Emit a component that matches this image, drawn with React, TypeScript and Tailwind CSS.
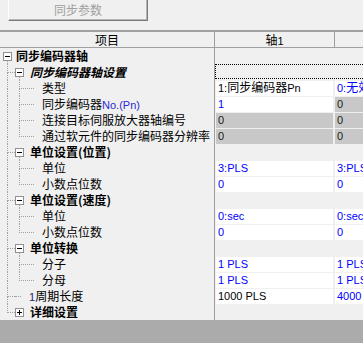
import type { ReactNode } from 'react';

type Row =
  | { kind: 'root'; label: string }
  | { kind: 'group'; label: string; italic?: boolean; focus?: boolean; last?: boolean; open?: boolean }
  | { kind: 'leaf'; label: ReactNode; last?: boolean; v1: Cell; v2: Cell }
  | { kind: 'item'; label: ReactNode; v1: Cell; v2: Cell };

type Cell = { text: ReactNode; tone: 'blue' | 'black' | 'gray' };

const rows: Row[] = [
  { kind: 'root', label: '同步编码器轴' },
  { kind: 'group', label: '同步编码器轴设置', italic: true, focus: true },
  {
    kind: 'leaf',
    label: '类型',
    v1: { text: <>1:<span className="text-[12px]">同步编码器</span>Pn</>, tone: 'black' },
    v2: { text: <>0:<span className="text-[12px]">无效</span></>, tone: 'blue' },
  },
  {
    kind: 'leaf',
    label: <>同步编码器<span className="text-[11px] text-[#2a2ad0] font-['Liberation_Sans']">No.(Pn)</span></>,
    v1: { text: '1', tone: 'blue' },
    v2: { text: '0', tone: 'gray' },
  },
  { kind: 'leaf', label: '连接目标伺服放大器轴编号', v1: { text: '0', tone: 'gray' }, v2: { text: '0', tone: 'gray' } },
  { kind: 'leaf', label: '通过软元件的同步编码器分辨率', last: true, v1: { text: '0', tone: 'gray' }, v2: { text: '0', tone: 'gray' } },
  { kind: 'group', label: '单位设置(位置)' },
  { kind: 'leaf', label: '单位', v1: { text: '3:PLS', tone: 'blue' }, v2: { text: '3:PLS', tone: 'blue' } },
  { kind: 'leaf', label: '小数点位数', last: true, v1: { text: '0', tone: 'blue' }, v2: { text: '0', tone: 'blue' } },
  { kind: 'group', label: '单位设置(速度)' },
  { kind: 'leaf', label: '单位', v1: { text: '0:sec', tone: 'blue' }, v2: { text: '0:sec', tone: 'blue' } },
  { kind: 'leaf', label: '小数点位数', last: true, v1: { text: '0', tone: 'blue' }, v2: { text: '0', tone: 'blue' } },
  { kind: 'group', label: '单位转换' },
  { kind: 'leaf', label: '分子', v1: { text: '1 PLS', tone: 'blue' }, v2: { text: '1 PLS', tone: 'blue' } },
  { kind: 'leaf', label: '分母', last: true, v1: { text: '1 PLS', tone: 'blue' }, v2: { text: '1 PLS', tone: 'blue' } },
  {
    kind: 'item',
    label: <><span className="text-[11px] text-[#1c1c80] font-['Liberation_Sans']">1</span>周期长度</>,
    v1: { text: '1000 PLS', tone: 'black' },
    v2: { text: '4000 PLS', tone: 'blue' },
  },
  { kind: 'group', label: '详细设置', last: true, open: false },
];

const toneClass = {
  blue: 'bg-white text-[#0000ff]',
  black: 'bg-white text-black',
  gray: 'bg-[#c8c8c8] text-[#1a1a1a]',
};

function BoxIcon({ open }: { open: boolean }) {
  return (
    <svg width="9" height="9" viewBox="0 0 9 9" className="block shrink-0">
      <rect x="0.5" y="0.5" width="8" height="8" fill="#fff" stroke="#919191" />
      <path d="M2 4.5h5" stroke="#000" />
      {!open && <path d="M4.5 2v5" stroke="#000" />}
    </svg>
  );
}

// vertical guide at x 7, optionally bending right to x 15
function Lane1({ elbow, last }: { elbow: boolean; last?: boolean }) {
  return (
    <div className="w-[15px] h-[16px] flex flex-col shrink-0">
      <div
        className={
          elbow
            ? 'ml-[7px] w-[8px] h-[9px] border-l border-b border-dotted border-[#a0a0a0]'
            : 'ml-[7px] h-[9px] border-l border-dotted border-[#a0a0a0]'
        }
      />
      {!last && <div className="ml-[7px] h-[7px] border-l border-dotted border-[#a0a0a0]" />}
    </div>
  );
}

function Lane2({ last }: { last?: boolean }) {
  return (
    <div className="w-[19px] h-[16px] flex flex-col shrink-0">
      <div className="ml-[4px] w-[15px] h-[9px] border-l border-b border-dotted border-[#a0a0a0]" />
      {!last && <div className="ml-[4px] h-[7px] border-l border-dotted border-[#a0a0a0]" />}
    </div>
  );
}

function BoxSlot({ open, tail }: { open: boolean; tail: boolean }) {
  return (
    <div className="w-[9px] h-[16px] flex flex-col shrink-0">
      <div className="h-[4px]" />
      <BoxIcon open={open} />
      {tail && <div className="ml-[4px] h-[3px] border-l border-dotted border-[#a0a0a0]" />}
    </div>
  );
}

function TreeCell({ row }: { row: Row }) {
  if (row.kind === 'root') {
    return (
      <div className="flex">
        <div className="w-[3px] shrink-0" />
        <BoxSlot open tail />
        <span className="ml-[4px] font-bold">{row.label}</span>
      </div>
    );
  }
  if (row.kind === 'group') {
    const open = row.open !== false;
    return (
      <div className="flex">
        <Lane1 elbow last={row.last} />
        <BoxSlot open={open} tail={open} />
        <span className={row.italic ? 'ml-[6px] font-bold italic' : 'ml-[6px] font-bold'}>{row.label}</span>
      </div>
    );
  }
  if (row.kind === 'leaf') {
    return (
      <div className="flex">
        <Lane1 elbow={false} />
        <Lane2 last={row.last} />
        <span className="ml-[8px] whitespace-nowrap">{row.label}</span>
      </div>
    );
  }
  return (
    <div className="flex">
      <Lane1 elbow />
      <div className="w-[6px] h-[9px] border-b border-dotted border-[#a0a0a0] shrink-0" />
      <span className="ml-[8px] whitespace-nowrap">{row.label}</span>
    </div>
  );
}

function ValueCell({ cell, wide }: { cell: Cell; wide?: boolean }) {
  return (
    <div
      className={`${wide ? 'w-[117px]' : 'flex-1'} mt-px h-[15px] pl-[2px] overflow-hidden whitespace-nowrap text-[11px] leading-[15px] font-['Liberation_Sans','Noto_Sans_CJK_SC',sans-serif] ${toneClass[cell.tone]}`}
    >
      {cell.text}
    </div>
  );
}

export default function App() {
  return (
    <div className="w-[363px] h-[343px] overflow-hidden bg-[#f0f0f0] flex flex-col text-[12px] leading-[16px] text-black font-['Noto_Sans_CJK_SC',sans-serif]">
      <div className="h-[30px] shrink-0">
        <div className="ml-[8px] w-[140px] h-[21px] border-l border-l-white border-r border-b border-[#7a7a7a] bg-[#f0f0f0] shadow-[inset_-1px_-1px_0_#b4b4b4] flex items-center justify-center text-[#a0a0a0]">
          同步参数
        </div>
      </div>

      <div className="h-[18px] shrink-0 border-t-2 border-b border-[#a0a0a0] flex text-[12px] leading-[15px]">
        <div className="w-[214px] text-center">项目</div>
        <div className="w-px bg-[#a0a0a0]" />
        <div className="w-[119px] text-center">
          轴<span className="font-['Liberation_Sans'] text-[11px]">1</span>
        </div>
        <div className="w-px bg-[#a0a0a0]" />
        <div className="flex-1" />
      </div>

      <div className="flex flex-col shrink-0">
        {rows.map((row, i) => (
          <div key={i} className="h-[16px] flex">
            <div className="w-[214px] h-[16px] overflow-hidden shrink-0">
              <TreeCell row={row} />
            </div>
            <div className="w-px bg-[#a0a0a0] shrink-0" />
            {row.kind === 'leaf' || row.kind === 'item' ? (
              <div className="flex-1 flex pl-px gap-[2px]">
                <ValueCell cell={row.v1} wide />
                <ValueCell cell={row.v2} />
              </div>
            ) : row.kind === 'group' && row.focus ? (
              <div className="flex-1 h-[15px] border border-r-0 border-dotted border-black" />
            ) : (
              <div className="flex-1" />
            )}
          </div>
        ))}
      </div>

      <div className="flex-1 bg-[#ababab]" />
    </div>
  );
}
